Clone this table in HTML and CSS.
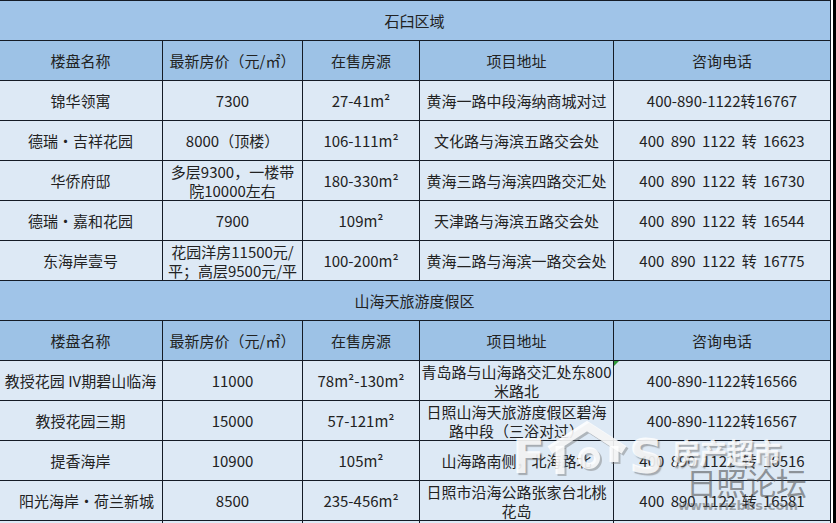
FILE: index.html
```html
<!DOCTYPE html>
<html lang="zh-CN">
<head>
<meta charset="utf-8">
<title>楼盘信息</title>
<link rel="stylesheet" href="styles.css">
</head>
<body>
<div class="page">
  <div class="sheet">
    <div class="t">石臼区域</div>

    <div class="h">楼盘名称</div>
    <div class="h">最新房价（元/㎡）</div>
    <div class="h">在售房源</div>
    <div class="h">项目地址</div>
    <div class="h">咨询电话</div>

    <div class="c">锦华领寓</div>
    <div class="c">7300</div>
    <div class="c">27-41m²</div>
    <div class="c">黄海一路中段海纳商城对过</div>
    <div class="c">400-890-1122转16767</div>

    <div class="c">德瑞・吉祥花园</div>
    <div class="c">8000（顶楼）</div>
    <div class="c">106-111m²</div>
    <div class="c">文化路与海滨五路交会处</div>
    <div class="c ph">400 890 1122 转 16623</div>

    <div class="c">华侨府邸</div>
    <div class="c two">多层9300，一楼带<br>院10000左右</div>
    <div class="c">180-330m²</div>
    <div class="c">黄海三路与海滨四路交汇处</div>
    <div class="c ph">400 890 1122 转 16730</div>

    <div class="c">德瑞・嘉和花园</div>
    <div class="c">7900</div>
    <div class="c">109m²</div>
    <div class="c">天津路与海滨五路交会处</div>
    <div class="c ph">400 890 1122 转 16544</div>

    <div class="c">东海岸壹号</div>
    <div class="c two">花园洋房11500元/<br>平；高层9500元/平</div>
    <div class="c">100-200m²</div>
    <div class="c">黄海二路与海滨一路交会处</div>
    <div class="c ph">400 890 1122 转 16775</div>

    <div class="t">山海天旅游度假区</div>

    <div class="h">楼盘名称</div>
    <div class="h">最新房价（元/㎡）</div>
    <div class="h">在售房源</div>
    <div class="h">项目地址</div>
    <div class="h">咨询电话</div>

    <div class="c">教授花园 IV期碧山临海</div>
    <div class="c">11000</div>
    <div class="c">78m²-130m²</div>
    <div class="c two">青岛路与山海路交汇处东800<br>米路北</div>
    <div class="c mark">400-890-1122转16566</div>

    <div class="c">教授花园三期</div>
    <div class="c">15000</div>
    <div class="c">57-121m²</div>
    <div class="c two">日照山海天旅游度假区碧海<br>路中段（三浴对过）</div>
    <div class="c">400-890-1122转16567</div>

    <div class="c">提香海岸</div>
    <div class="c">10900</div>
    <div class="c">105m²</div>
    <div class="c">山海路南侧，北海路北</div>
    <div class="c ph">400 890 1122 转 16516</div>

    <div class="c shift">阳光海岸・荷兰新城</div>
    <div class="c">8500</div>
    <div class="c">235-456m²</div>
    <div class="c two">日照市沿海公路张家台北桃<br>花岛</div>
    <div class="c ph">400 890 1122 转 16581</div>

    <div class="c"></div>
    <div class="c"></div>
    <div class="c"></div>
    <div class="c"></div>
    <div class="c"></div>
  </div>

  <div class="wm" aria-hidden="true">
    <div class="wm-logo">
      <span class="wm-f">F</span>
      <svg class="wm-house" width="86" height="56" viewBox="0 0 86 56">
        <g fill="none" stroke="rgba(120,120,120,0.45)" transform="translate(2,2)">
          <polyline points="6,30 43,6 80,30" stroke-width="9"/>
          <line x1="16" y1="26" x2="16" y2="54" stroke-width="9"/>
          <circle cx="45" cy="38" r="8" stroke-width="6"/>
          <line x1="70" y1="26" x2="70" y2="42" stroke-width="9"/>
        </g>
        <g fill="none" stroke="rgba(255,255,255,0.85)">
          <polyline points="6,30 43,6 80,30" stroke-width="9"/>
          <line x1="16" y1="26" x2="16" y2="54" stroke-width="9"/>
          <circle cx="45" cy="38" r="8" stroke-width="6"/>
          <line x1="70" y1="26" x2="70" y2="42" stroke-width="9"/>
        </g>
      </svg>
      <span class="wm-s">S</span>
    </div>
    <div class="wm-cn1">房产超市</div>
    <div class="wm-cn2">日照论坛</div>
    <div class="wm-url">www.rizbbs.com</div>
  </div>
</div>
</body>
</html>
```
FILE: styles.css
```css
html, body {
  margin: 0;
  padding: 0;
}

body {
  background: #000;
  overflow: hidden;
  font-family: "Noto Sans CJK SC", "Noto Sans", sans-serif;
  color: #222;
}

.page {
  position: relative;
  width: 835px;
  height: 523px;
  margin-left: -2px;
  background: #fff;
  overflow: hidden;
}

.sheet {
  display: grid;
  grid-template-columns: 164px 140px 117px 194px 217px;
  grid-auto-rows: 40px;
  width: 832px;
  border-top: 1px solid #141b26;
  border-left: 1px solid #141b26;
}

.t,
.h,
.c {
  box-sizing: border-box;
  border-right: 1px solid #141b26;
  border-bottom: 1px solid #141b26;
  display: flex;
  align-items: center;
  justify-content: center;
  text-align: center;
  font-size: 15px;
  line-height: 19px;
  white-space: nowrap;
}

.t {
  grid-column: 1 / -1;
  background: #a0c4e8;
}

.h {
  background: #9dc2e6;
}

.c {
  background: #dde9f5;
}

.c.two {
  padding-top: 1px;
}

.c.shift {
  padding-left: 12px;
}

.c.ph {
  word-spacing: 3px;
}

.c.mark {
  position: relative;
}

.c.mark::before {
  content: "";
  position: absolute;
  left: 0;
  top: 0;
  border-top: 5px solid #2f9a3a;
  border-right: 5px solid transparent;
}

/* watermark overlay */
.wm {
  position: absolute;
  left: 506px;
  top: 415px;
  width: 320px;
  height: 108px;
  pointer-events: none;
}

.wm-logo {
  position: absolute;
  left: 8px;
  top: 5px;
  display: flex;
  align-items: flex-end;
}

.wm-f,
.wm-s {
  font-family: "DejaVu Sans", sans-serif;
  font-weight: bold;
  font-size: 48px;
  line-height: 40px;
  color: rgba(255, 255, 255, 0.85);
  text-shadow: 2px 2px 1px rgba(110, 110, 110, 0.5);
}

.wm-house {
  display: block;
  margin: 0 -1px;
}

.wm-cn1 {
  position: absolute;
  left: 168px;
  top: 22px;
  font-size: 28px;
  line-height: 30px;
  font-weight: bold;
  letter-spacing: -1px;
  color: rgba(255, 255, 255, 0.82);
  text-shadow: 2px 2px 1px rgba(110, 110, 110, 0.5);
}

.wm-cn2 {
  position: absolute;
  left: 182px;
  top: 50px;
  font-size: 31px;
  line-height: 34px;
  letter-spacing: -1px;
  color: rgba(70, 70, 70, 0.55);
}

.wm-url {
  position: absolute;
  left: 174px;
  top: 84px;
  font-family: "DejaVu Sans", sans-serif;
  font-weight: bold;
  font-size: 13px;
  line-height: 14px;
  color: rgba(90, 90, 90, 0.5);
}
```
